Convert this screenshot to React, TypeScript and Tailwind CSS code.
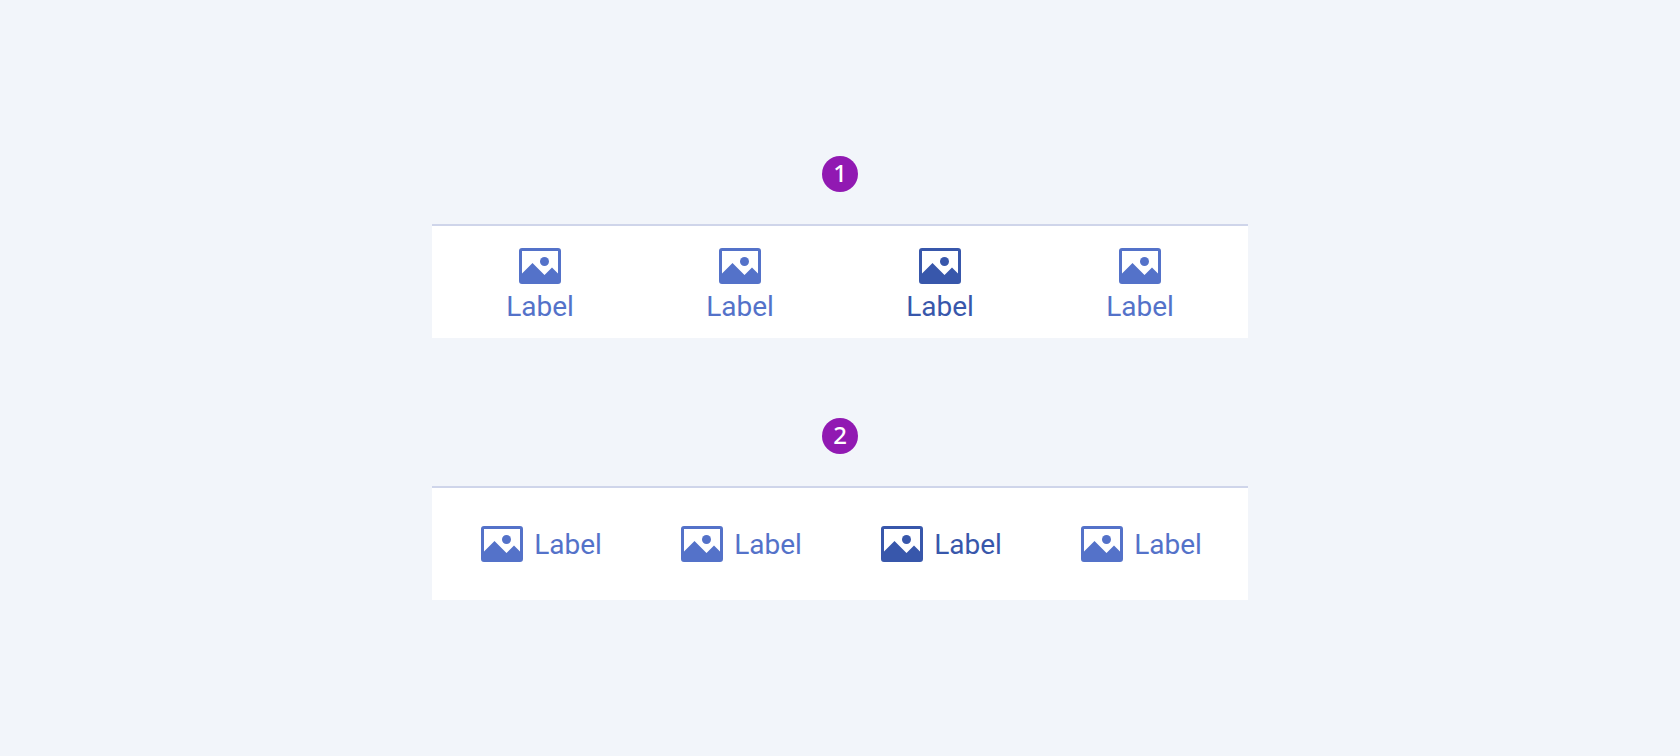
import { useState } from "react";

function ImageIcon() {
  return (
    <svg viewBox="0 0 48 48" className="size-12 shrink-0" fill="currentColor" aria-hidden="true">
      <path
        fillRule="evenodd"
        d="M6 6h36a3 3 0 0 1 3 3v30a3 3 0 0 1-3 3H6a3 3 0 0 1-3-3V9a3 3 0 0 1 3-3ZM6 9v22.5L16.500 21L28.500 33L36 25.500L42 31.500V9Z"
      />
      <circle cx="28.500" cy="19.500" r="4.500" />
    </svg>
  );
}

function BottomNavigation({ name, inline = false }: { name: string; inline?: boolean }) {
  const [selected, setSelected] = useState(2);
  return (
    <nav aria-label={name} className="w-full border-t-2 border-[#cfd5ea] bg-white px-2">
      <ul className="grid grid-cols-4">
        {[0, 1, 2, 3].map((item) => (
          <li key={item}>
            <button
              type="button"
              aria-current={item === selected ? "page" : undefined}
              onClick={() => setSelected(item)}
              className={`flex h-28 w-full items-center justify-center text-[28px] leading-[30px] ${
                inline ? "flex-row gap-2" : "flex-col"
              } ${item === selected ? "text-[#3857ab]" : "text-[#5472c9]"}`}
            >
              <ImageIcon />
              <span className="pt-0.5">Label</span>
            </button>
          </li>
        ))}
      </ul>
    </nav>
  );
}

function Badge({ children }: { children: string }) {
  return (
    <span className="flex size-9 items-center justify-center rounded-full bg-[#9119b2] pb-0.5 font-['Noto_Sans',sans-serif] text-2xl leading-8 font-medium text-white">
      {children}
    </span>
  );
}

export default function App() {
  return (
    <main className="flex min-h-screen flex-col items-center justify-center gap-20 bg-[#f2f5fa] font-['Roboto',sans-serif]">
      <section className="flex w-full max-w-[816px] flex-col items-center gap-8">
        <Badge>1</Badge>
        <BottomNavigation name="Stacked labels" />
      </section>
      <section className="flex w-full max-w-[816px] flex-col items-center gap-8">
        <Badge>2</Badge>
        <BottomNavigation name="Inline labels" inline />
      </section>
    </main>
  );
}
